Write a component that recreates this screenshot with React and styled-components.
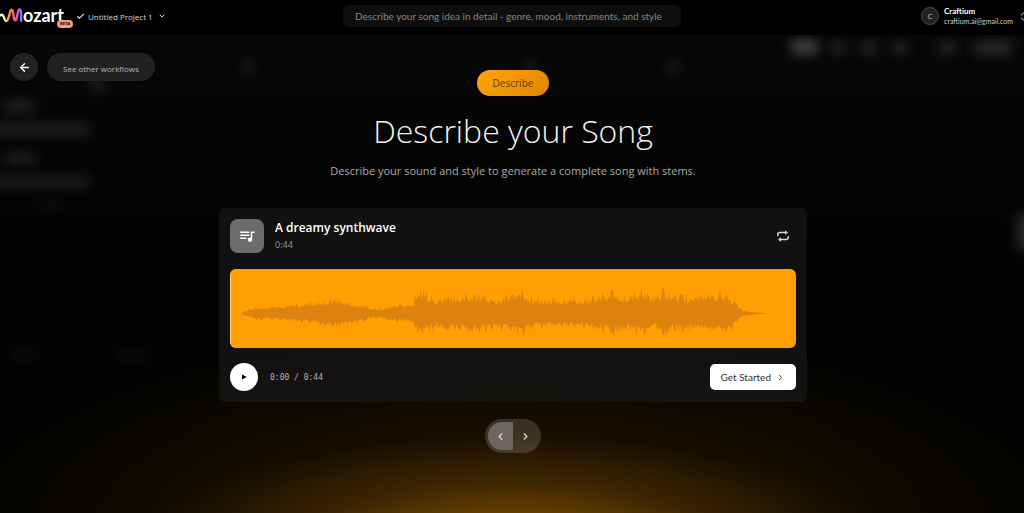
import styled, { createGlobalStyle } from "styled-components";
import {
  ArrowLeft,
  Check,
  ChevronDown,
  ChevronLeft,
  ChevronRight,
  ChevronsUpDown,
} from "lucide-react";
import { MdQueueMusic } from "react-icons/md";

const GlobalStyle = createGlobalStyle`
  * {
    box-sizing: border-box;
  }
  body {
    margin: 0;
    background-color: #030303;
    color: #ffffff;
    font-family: "Segoe UI", "Open Sans", sans-serif;
    overflow-x: hidden;
  }
  button {
    font-family: inherit;
    border: 0;
    padding: 0;
    cursor: pointer;
  }
  svg {
    display: block;
    flex-shrink: 0;
  }
`;
const Page = styled.div`
  min-height: 100vh;
  display: flex;
  flex-direction: column;
`;
const Header = styled.header`
  height: 35px;
  display: grid;
  grid-template-columns: 1fr minmax(0, 338px) 1fr;
  align-items: center;
  background-color: #000000;
  padding-bottom: 3px;
  overflow: hidden;
`;
const HeaderLeft = styled.div`
  display: flex;
  align-items: center;
`;
const Logo = styled.a`
  position: relative;
  display: flex;
  align-items: center;
  width: 76px;
  color: #ffffff;
  text-decoration: none;
`;
const LogoText = styled.span`
  font-family: Lato, sans-serif;
  font-size: 18px;
  font-weight: 700;
  line-height: 18px;
  padding-bottom: 2px;
`;
const Beta = styled.span`
  position: absolute;
  left: 57px;
  bottom: 0;
  height: 8px;
  padding: 0 3px;
  border-radius: 4px;
  background-color: #f09a78;
  color: #3a1408;
  font-size: 4px;
  font-weight: 800;
  line-height: 8px;
`;
const ProjectButton = styled.button`
  display: flex;
  align-items: center;
  gap: 3px;
  background: none;
  color: #d8d8d8;
  font-size: 8px;
`;
const ProjectName = styled.span`
  margin-right: 2px;
`;
const Prompt = styled.input`
  width: 100%;
  height: 22px;
  padding: 0 12px;
  border: 0;
  border-radius: 6px;
  background-color: #0e0e0e;
  color: #dddddd;
  font-family: "Segoe UI", Lato, sans-serif;
  font-size: 10px;
  &::placeholder {
    color: #858585;
    opacity: 1;
  }
`;
const Account = styled.button`
  justify-self: end;
  display: flex;
  align-items: center;
  gap: 5px;
  margin-right: -5px;
  background: none;
  color: #eeeeee;
  text-align: left;
`;
const Avatar = styled.span`
  width: 18px;
  height: 18px;
  border: 1px solid #4a4a4a;
  border-radius: 50%;
  background-color: #222222;
  color: #c4c4c4;
  font-size: 8px;
  line-height: 16px;
  text-align: center;
`;
const AccountText = styled.span`
  display: flex;
  flex-direction: column;
  font-family: "Segoe UI", Lato, sans-serif;
  font-size: 7px;
  line-height: 10px;
  color: #cfcfcf;
`;
const AccountName = styled.strong`
  font-size: 8px;
  font-weight: 700;
  color: #ffffff;
`;

const Stage = styled.main`
  position: relative;
  flex: 1;
  display: flex;
  flex-direction: column;
  align-items: center;
  padding: 35px 16px 16px 18px;
  overflow: hidden;
  isolation: isolate;
  background:
    radial-gradient(ellipse 36% 100px at 50% 105%, rgba(150, 92, 0, 0.76), rgba(104, 62, 0, 0.34) 55%, transparent),
    radial-gradient(ellipse 56% 210px at 50% 104%, rgba(100, 64, 0, 0.55), rgba(54, 34, 0, 0.36) 50%, transparent),
    linear-gradient(#070707, #030303 45%, #020200);
`;
const Backdrop = styled.div`
  position: absolute;
  inset: 0;
  z-index: -1;
  overflow: hidden;
  pointer-events: none;
`;
const Smudge = styled.span`
  position: absolute;
  top: ${(props) => props.$top}px;
  left: ${(props) => props.$left};
  width: ${(props) => props.$width}px;
  height: ${(props) => props.$height || 12}px;
  border-radius: 4px;
  background-color: rgba(255, 255, 255, ${(props) => props.$alpha});
  filter: blur(6px);
`;
const Shortcuts = styled.nav`
  position: absolute;
  top: 18px;
  left: 10px;
  display: flex;
  gap: 9px;
`;
const PillButton = styled.button`
  height: 28px;
  min-width: 28px;
  display: flex;
  align-items: center;
  justify-content: center;
  padding: ${(props) => (props.$text ? "2px 16px 0" : "0")};
  border-radius: 14px;
  background-color: #222222;
  color: ${(props) => (props.$text ? "#b8b8b8" : "#ffffff")};
  font-size: 8px;
`;
const Badge = styled.span`
  height: 26px;
  padding: 0 16px;
  border-radius: 13px;
  background: linear-gradient(135deg, #ffa50a, #e28400);
  color: #633c06;
  font-size: 10px;
  line-height: 26px;
`;
const Title = styled.h1`
  margin: 11px 0 0;
  font-size: 32px;
  font-weight: 300;
  line-height: 48px;
  color: #f2f2f2;
`;
const Subtitle = styled.p`
  margin: 8px 0 0;
  font-size: 11px;
  line-height: 16px;
  color: #aaaaaa;
`;
const Card = styled.section`
  width: 100%;
  max-width: 588px;
  margin: 29px 0 17px;
  padding: 11px;
  border-radius: 6px;
  background-color: rgba(24, 24, 24, 0.7);
`;
const CardHeader = styled.div`
  display: flex;
  align-items: center;
  gap: 11px;
`;
const Cover = styled.div`
  width: 34px;
  height: 34px;
  display: flex;
  align-items: center;
  justify-content: center;
  border-radius: 8px;
  background-color: #6c6c6c;
`;
const TrackTitle = styled.h2`
  margin: 0;
  font-size: 12px;
  font-weight: 600;
  line-height: 18px;
`;
const TrackLength = styled.div`
  font-size: 9px;
  line-height: 16px;
  color: #9b9b9b;
`;
const LoopButton = styled.button`
  margin: 0 6px 0 auto;
  background: none;
  color: #d6d6d6;
`;
const Wave = styled.div`
  height: 79px;
  margin: 16px 0 15px;
  border-left: 1px solid #ffd080;
  border-radius: 6px;
  background-color: #ff9f04;
  overflow: hidden;
`;
const CardFooter = styled.div`
  display: flex;
  align-items: center;
  gap: 12px;
`;
const PlayButton = styled.button`
  width: 28px;
  height: 28px;
  display: flex;
  align-items: center;
  justify-content: center;
  border-radius: 50%;
  background-color: #ffffff;
`;
const Time = styled.span`
  font-family: "DejaVu Sans Mono", monospace;
  font-size: 8px;
  color: #b5b5b5;
`;
const StartButton = styled.button`
  height: 26px;
  display: flex;
  align-items: center;
  gap: 5px;
  margin-left: auto;
  padding: 0 11px;
  border-radius: 5px;
  background-color: #ffffff;
  color: #333333;
  font-family: "Segoe UI", Lato, sans-serif;
  font-size: 10px;
`;
const Pager = styled.div`
  display: flex;
  padding: 3px;
  border-radius: 17px;
  background-color: rgba(255, 240, 225, 0.16);
`;
const PagerButton = styled.button`
  width: 25px;
  height: 28px;
  display: flex;
  align-items: center;
  justify-content: center;
  border-radius: ${(props) => (props.$active ? "14px 0 0 14px" : "0 14px 14px 0")};
  background-color: ${(props) => (props.$active ? "#6d675f" : "transparent")};
  color: #e6e0d8;
`;

// blurred remains of the editor behind the dialog
const smudges = [
  { top: 5, left: "77.2%", width: 27, height: 14, alpha: 0.25 },
  { top: 7, left: "81%", width: 18, alpha: 0.1 },
  { top: 7, left: "84%", width: 18, alpha: 0.12 },
  { top: 7, left: "87%", width: 18, alpha: 0.12 },
  { top: 7, left: "91.5%", width: 20, alpha: 0.12 },
  { top: 7, left: "95%", width: 40, alpha: 0.15 },
  { top: 26, left: "23.5%", width: 14, alpha: 0.08 },
  { top: 26, left: "51%", width: 14, alpha: 0.08 },
  { top: 26, left: "65%", width: 14, alpha: 0.08 },
  { top: 44, left: "8.8%", width: 16, alpha: 0.1 },
  { top: 65, left: "0.3%", width: 32, alpha: 0.11 },
  { top: 88, left: "-1%", width: 100, alpha: 0.11 },
  { top: 118, left: "0.3%", width: 34, alpha: 0.1 },
  { top: 141, left: "-1%", width: 100, alpha: 0.1 },
  { top: 164, left: "3%", width: 36, alpha: 0.03 },
  { top: 312, left: "0.8%", width: 32, alpha: 0.04 },
  { top: 315, left: "11%", width: 40, alpha: 0.03 },
  { top: 178, left: "99.3%", width: 16, height: 38, alpha: 0.15 },
];

// [x, peak] pairs of the loudness curve
const envelope = [
  [10, 0], [15, 3], [24, 7], [44, 8], [64, 10], [80, 12], [91, 15], [104, 18],
  [114, 15], [124, 12], [134, 9], [142, 6], [148, 5], [160, 9], [176, 10],
  [182, 11], [185, 21], [190, 26], [198, 22], [205, 16], [216, 19], [230, 20],
  [240, 24], [250, 22], [264, 17], [280, 22], [293, 26], [300, 19], [314, 16],
  [334, 16], [350, 17], [366, 19], [382, 25], [396, 20], [414, 27], [424, 17],
  [432, 27], [444, 22], [460, 20], [480, 23], [494, 25], [501, 19], [506, 11],
  [512, 4], [518, 2], [536, 0],
];

const peakAt = (x) => {
  const i = envelope.findIndex((point) => point[0] >= x);
  if (i < 1) return 0;
  const [x0, y0] = envelope[i - 1];
  const [x1, y1] = envelope[i];
  return y0 + ((y1 - y0) * (x - x0)) / (x1 - x0);
};
const noise = (n) => {
  const value = Math.sin(n * 127.1) * 43758.5453;
  return value - Math.floor(value);
};
const buildWave = () => {
  const top = [];
  const bottom = [];
  for (let x = 10; x <= 536; x += 1) {
    const peak = peakAt(x);
    const up = peak * (0.5 + 0.48 * noise(x) ** 2);
    const down = peak * (0.5 + 0.44 * noise(x + 900) ** 2);
    top.push(`${x},${(44 - up).toFixed(1)}`);
    bottom.unshift(`${x},${(44.6 + down).toFixed(1)}`);
  }
  return `M${top.join("L")}L${bottom.join("L")}Z`;
};
const wavePath = buildWave();

const App = () => {
  return (
    <Page>
      <GlobalStyle />
      <Header>
        <HeaderLeft>
          <Logo href="#" aria-label="Mozart">
            <svg width="23" height="24" viewBox="0 0 23 24" fill="none">
              <defs>
                <linearGradient id="logo" x1="0" x2="23" y1="0" y2="0" gradientUnits="userSpaceOnUse">
                  <stop offset="0" stopColor="#ffffff" />
                  <stop offset="0.2" stopColor="#ffe6c0" />
                  <stop offset="0.38" stopColor="#ff9a3c" />
                  <stop offset="0.62" stopColor="#f0588a" />
                  <stop offset="0.85" stopColor="#a070f0" />
                  <stop offset="1" stopColor="#8a68e8" />
                </linearGradient>
              </defs>
              <path
                d="M0 11.500C1.800 10 3 11 3.800 13C4.500 15 5 17 6.500 17C7.800 17 8.200 15 9 12L10.500 7C11.200 5 12.400 5.300 12.800 7L14 14C14.500 17 16 17 16.600 14L18.300 7C19 4.800 20.700 4.800 21 7.500L21.300 17"
                stroke="url(#logo)"
                strokeWidth="2.4"
                strokeLinecap="round"
              />
            </svg>
            <LogoText>ozart</LogoText>
            <Beta>BETA</Beta>
          </Logo>
          <ProjectButton>
            <Check size={9} strokeWidth={3} />
            <ProjectName>Untitled Project 1</ProjectName>
            <ChevronDown size={8} strokeWidth={3} />
          </ProjectButton>
        </HeaderLeft>
        <Prompt
          aria-label="Song idea"
          placeholder="Describe your song idea in detail - genre, mood, instruments, and style"
        />
        <Account>
          <Avatar>C</Avatar>
          <AccountText>
            <AccountName>Craftium</AccountName>
            craftium.ai@gmail.com
          </AccountText>
          <ChevronsUpDown size={11} />
        </Account>
      </Header>
      <Stage>
        <Backdrop>
          {smudges.map((item, index) => (
            <Smudge
              key={index}
              $top={item.top}
              $left={item.left}
              $width={item.width}
              $height={item.height}
              $alpha={item.alpha}
            />
          ))}
        </Backdrop>
        <Shortcuts>
          <PillButton aria-label="Back">
            <ArrowLeft size={13} strokeWidth={2.5} />
          </PillButton>
          <PillButton $text>See other workflows</PillButton>
        </Shortcuts>
        <Badge>Describe</Badge>
        <Title>Describe your Song</Title>
        <Subtitle>
          Describe your sound and style to generate a complete song with stems.
        </Subtitle>
        <Card>
          <CardHeader>
            <Cover>
              <MdQueueMusic size={18} />
            </Cover>
            <div>
              <TrackTitle>A dreamy synthwave</TrackTitle>
              <TrackLength>0:44</TrackLength>
            </div>
            <LoopButton aria-label="Loop">
              <svg width="14" height="14" viewBox="0 0 14 14" fill="none">
                <path
                  d="M1.800 6.500V5.500Q1.800 3.500 3.800 3.500H10M12.200 7.500V8.500Q12.200 10.500 10.200 10.500H4"
                  stroke="currentColor"
                  strokeWidth="1.5"
                  strokeLinecap="round"
                />
                <path
                  d="M9 1.200L12 3.500L9 5.800ZM5 8.200L2 10.500L5 12.800Z"
                  fill="currentColor"
                />
              </svg>
            </LoopButton>
          </CardHeader>
          <Wave>
            <svg width="100%" height="79" viewBox="0 0 566 79" preserveAspectRatio="none">
              <path d={wavePath} fill="#dc830f" />
            </svg>
          </Wave>
          <CardFooter>
            <PlayButton aria-label="Play">
              <svg width="6" height="6" viewBox="0 0 6 6">
                <path d="M1 0.500L5.700 3L1 5.500Z" fill="#000000" />
              </svg>
            </PlayButton>
            <Time>0:00 / 0:44</Time>
            <StartButton>
              Get Started
              <ChevronRight size={9} strokeWidth={2.5} />
            </StartButton>
          </CardFooter>
        </Card>
        <Pager>
          <PagerButton $active aria-label="Previous">
            <ChevronLeft size={11} strokeWidth={2.5} />
          </PagerButton>
          <PagerButton aria-label="Next">
            <ChevronRight size={11} strokeWidth={2.5} />
          </PagerButton>
        </Pager>
      </Stage>
    </Page>
  );
};

export default App;
